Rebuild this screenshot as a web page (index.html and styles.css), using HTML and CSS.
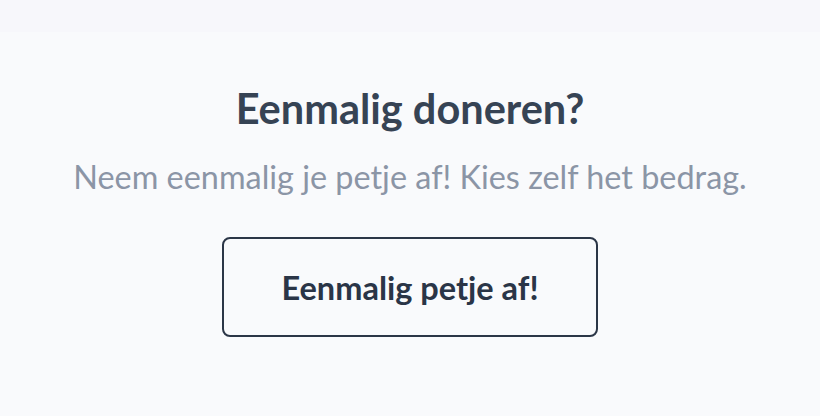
FILE: index.html
```html
<!DOCTYPE html>
<html>
<head>
<title>Eenmalig doneren</title>
<link rel="stylesheet" href="styles.css">
</head>
<body>
<div class="topbar"></div>
<div class="donate">
  <h2 class="donate-title">Eenmalig doneren?</h2>
  <p class="donate-text">Neem eenmalig je petje af! Kies zelf het bedrag.</p>
  <button class="donate-button">Eenmalig petje af!</button>
</div>
</body>
</html>
```

FILE: styles.css
```css
body {
  margin: 0;
  font-family: "Lato", "Noto Sans", sans-serif;
  background-color: #f9fafc;
}

.topbar {
  height: 32px;
  background-color: #f7f7fb;
}

.donate {
  display: flex;
  flex-direction: column;
  align-items: center;
  padding-top: 52px;
}

.donate-title {
  margin: 0;
  font-size: 41.5px;
  font-weight: 700;
  color: #364354;
  line-height: 48px;
}

.donate-text {
  margin: 25px 0 0 0;
  font-size: 32.4px;
  color: #8b95a6;
  line-height: 40px;
}

.donate-button {
  margin-top: 40px;
  width: 376px;
  height: 100px;
  border: 2px solid #2b3647;
  border-radius: 8px;
  background: transparent;
  font-family: inherit;
  font-size: 32.5px;
  font-weight: 700;
  color: #2a3547;
}
```
